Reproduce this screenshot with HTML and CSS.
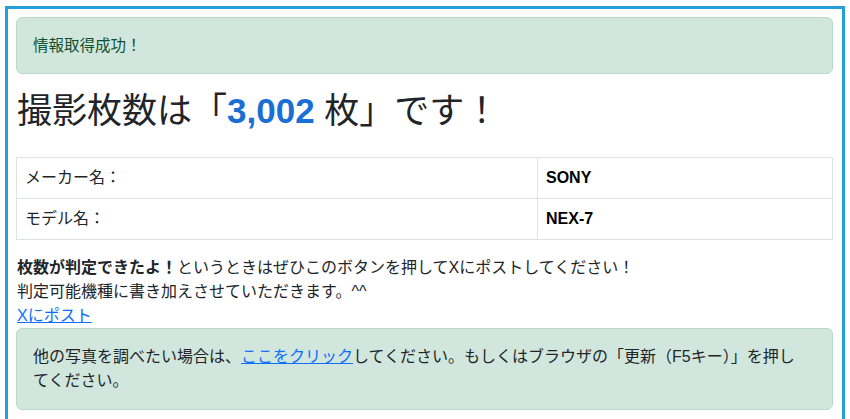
FILE: index.html
```html
<!DOCTYPE html>
<html lang="ja">
<head>
<meta charset="utf-8">
<title>撮影枚数</title>
<link rel="stylesheet" href="styles.css">
</head>
<body>
<div class="frame">
  <div class="alert alert-small">情報取得成功！</div>
  <h1 class="title">撮影枚数は「<span class="count">3,002</span> 枚」です！</h1>
  <table class="info">
    <tbody>
      <tr><td class="label">メーカー名：</td><td class="value">SONY</td></tr>
      <tr><td class="label">モデル名：</td><td class="value">NEX-7</td></tr>
    </tbody>
  </table>
  <p class="note"><strong>枚数が判定できたよ！</strong>というときはぜひこのボタンを押してXにポストしてください！<br>判定可能機種に書き加えさせていただきます。^^<br><a href="#" class="link">Xにポスト</a></p>
  <div class="alert alert-body">他の写真を調べたい場合は、<a href="#" class="link">ここをクリック</a>してください。もしくはブラウザの「更新（F5キー）」を押してください。</div>
</div>
</body>
</html>
```
FILE: styles.css
```css
html, body {
  margin: 0;
  padding: 0;
  background: #fff;
}
body {
  font-family: "Liberation Sans", "Noto Sans CJK JP", sans-serif;
  font-size: 16px;
  line-height: 1.5;
  color: #212529;
  overflow: hidden;
}
.frame {
  margin: 6px 5px 0 5px;
  border: 3px solid #23a0da;
  border-bottom: none;
  padding: 8px 9px 40px 8px;
}
.alert {
  background: #d1e7dd;
  border: 1px solid #badbcc;
  border-radius: 6px;
  padding: 16px;
}
.alert-small {
  font-size: 15.5px;
  line-height: 23px;
  color: #0f5132;
  margin-bottom: 16px;
}
.alert-body {
  color: #212529;
  padding-right: 26px;
}
.title {
  font-size: 35px;
  font-weight: 400;
  line-height: 1.2;
  margin: 3px 0 25px 0;
  padding-left: 1px;
  color: #212529;
}
.count {
  color: #1a6fd4;
  font-weight: 700;
}
.info {
  width: 100%;
  border-collapse: collapse;
  margin-bottom: 16px;
}
.info td {
  border: 1px solid #dee2e6;
  padding: 8px;
  vertical-align: top;
}
.label {
  width: 504px;
}
.value {
  font-weight: 700;
  color: #000;
}
.note {
  margin: 0;
  padding-left: 1px;
}
.note strong {
  font-weight: 700;
}
.link {
  color: #0d6efd;
  text-decoration: underline;
}
```
